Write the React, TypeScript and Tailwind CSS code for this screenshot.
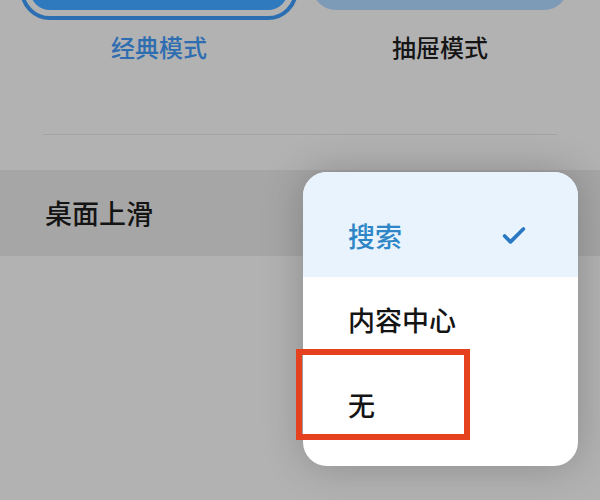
import { Check } from "lucide-react";

const font = { fontFamily: '"Noto Sans CJK SC", "Noto Sans", sans-serif' };

function ModeCard({
  label,
  active,
}: {
  label: string;
  active?: boolean;
}) {
  return (
    <div className="flex flex-col items-center">
      <div className="h-[20px] flex items-end">
        {active ? (
          <div className="w-[278px] h-[60px] rounded-[30px] border-4 border-[#2b6fb2] p-[6px]">
            <div className="h-full rounded-[22px] bg-[#2f79bf]" />
          </div>
        ) : (
          <div className="w-[256px] h-[50px] mb-[10px] rounded-[24px] bg-[#7d9ab6]" />
        )}
      </div>
      <p
        className={`mt-[13px] text-[24px] leading-[28px] font-medium ${
          active ? "text-[#2f6db1]" : "text-[#151515]"
        }`}
      >
        {label}
      </p>
    </div>
  );
}

export default function App() {
  return (
    <div
      style={font}
      className="relative w-[600px] h-[500px] overflow-hidden bg-[#b2b2b2]"
    >
      <div className="flex pl-[20px] gap-[14px]">
        <ModeCard label="经典模式" active />
        <ModeCard label="抽屉模式" />
      </div>

      <div className="mx-[43px] mt-[73px] h-px bg-[#a4a4a4]" />

      <div className="mt-[35px] h-[86px] bg-[#a6a6a6] flex items-center pl-[45px]">
        <span className="text-[27px] leading-[30px] font-medium text-[#141414]">
          桌面上滑
        </span>
      </div>

      {/* dropdown */}
      <div className="absolute left-[303px] top-[172px] w-[275px] h-[294px] rounded-[24px] bg-white overflow-hidden shadow-[0_0_40px_rgba(0,0,0,0.22)]">
        <div className="h-[105px] pt-[22px] bg-[#e8f3fd] flex items-center justify-between pl-[45px] pr-[50px]">
          <span className="text-[27px] leading-[30px] font-medium text-[#2e86c6]">搜索</span>
          <Check className="w-[28px] h-[28px] text-[#2a78c2]" strokeWidth={3.2} />
        </div>
        <div className="h-[85px] flex items-center pl-[45px]">
          <span className="text-[27px] leading-[30px] font-medium text-[#141414]">内容中心</span>
        </div>
        <div className="h-[85px] flex items-center pl-[45px]">
          <span className="text-[27px] leading-[30px] font-medium text-[#141414]">无</span>
        </div>
      </div>

      {/* annotation */}
      <div className="absolute left-[296px] top-[349px] w-[174px] h-[91px] border-[6px] border-[#e5411e]" />
    </div>
  );
}
